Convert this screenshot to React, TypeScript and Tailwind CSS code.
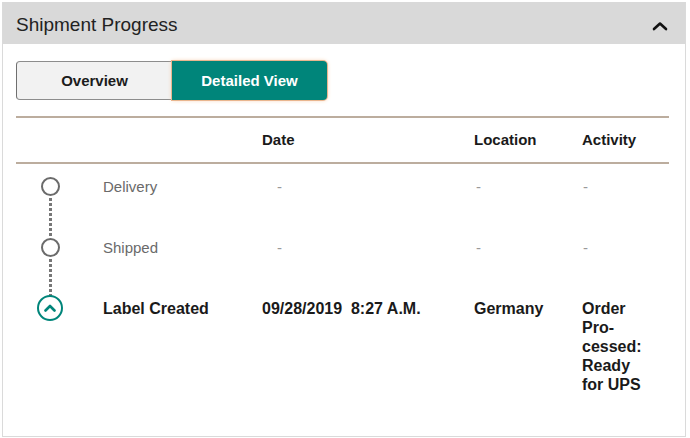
import React from 'react';

type Step = {
  label: string;
  date: string;
  location: string;
  activity: React.ReactNode;
  current?: boolean;
};

const steps: Step[] = [
  { label: 'Delivery', date: '-', location: '-', activity: '-' },
  { label: 'Shipped', date: '-', location: '-', activity: '-' },
  {
    label: 'Label Created',
    date: '09/28/2019\u00a0\u00a08:27 A.M.',
    location: 'Germany',
    activity: (
      <>
        Order
        <br />
        Pro-
        <br />
        cessed:
        <br />
        Ready
        <br />
        for UPS
      </>
    ),
    current: true,
  },
];

function StepIcon({ current, last }: { current?: boolean; last: boolean }) {
  return (
    <div className="flex w-[68px] h-full flex-col items-center">
      {current ? (
        <div className="relative z-10 -mt-[4px] flex h-[26px] w-[26px] items-center justify-center rounded-full border-[2.5px] border-[#00857a] bg-white">
          <svg width="12" height="8" viewBox="0 0 12 8" fill="none">
            <polyline points="1.5,6.5 6,2 10.5,6.5" stroke="#00857a" strokeWidth="2.6" strokeLinecap="round" strokeLinejoin="round" />
          </svg>
        </div>
      ) : (
        <div className="relative z-10 h-[19px] w-[19px] rounded-full border-2 border-[#6b6b6b] bg-white" />
      )}
      {!last && (
        <div className="w-[3px] flex-1 bg-[repeating-linear-gradient(to_bottom,transparent_0_2px,#777777_2px_5px)]" />
      )}
    </div>
  );
}

export default function App() {
  return (
    <div className="ml-[2px] mt-[2px] h-[435px] w-[684px] border-x border-b border-[#dadada] bg-white font-['Liberation_Sans',Arial,sans-serif]">
      {/* header */}
      <div className="flex h-[42px] items-center justify-between bg-[#d9d9d9] pl-[13px] pr-[17px] pt-[5px]">
        <span className="text-[19px] text-[#222222]">Shipment Progress</span>
        <svg width="16" height="10" viewBox="0 0 16 10" fill="none">
          <polyline points="2,8 8,2.5 14,8" stroke="#111111" strokeWidth="2.6" strokeLinecap="round" strokeLinejoin="round" />
        </svg>
      </div>

      <div className="pl-[13px] pr-[16px] pt-[17px]">
        {/* toggle */}
        <div className="flex h-[39px] text-[15px] font-bold">
          <button className="w-[156px] rounded-l-[4px] border border-r-0 border-[#8d8d8d] border-l-[#6f6f6f] bg-[#f2f2f2] pt-[2px] text-[#1c1c1c]">
            Overview
          </button>
          <button className="w-[155px] rounded-r-[4px] bg-[#00857a] pt-[2px] text-white shadow-[0_0_0_1px_#e9b68f,0_0_4px_#f5c8a2]">
            Detailed View
          </button>
        </div>

        {/* table */}
        <div className="mt-[16px] w-[653px]">
          <div className="grid h-[48px] grid-cols-[87px_159px_212px_108px_87px] items-center border-y-2 border-[#bcad9e] text-[15px] font-bold text-[#1a1a1a]">
            <div />
            <div />
            <div>Date</div>
            <div>Location</div>
            <div>Activity</div>
          </div>

          <div className="pt-[13px]">
            {steps.map((s, i) => (
              <div
                key={s.label}
                className={`grid h-[61px] grid-cols-[87px_159px_212px_108px_87px] leading-[19px] ${
                  s.current ? 'text-[16px] font-bold text-[#1a1a1a]' : 'text-[15px] text-[#6a6a6a]'
                }`}
              >
                <div className="h-[61px]">
                  <StepIcon current={s.current} last={i === steps.length - 1} />
                </div>
                <div>{s.label}</div>
                <div className={s.current ? '' : 'pl-[15px] text-[#999999]'}>{s.date}</div>
                <div className={s.current ? '' : 'pl-[2px] text-[#999999]'}>{s.location}</div>
                <div className={s.current ? '' : 'pl-[1px] text-[#999999]'}>{s.activity}</div>
              </div>
            ))}
          </div>
        </div>
      </div>
    </div>
  );
}
